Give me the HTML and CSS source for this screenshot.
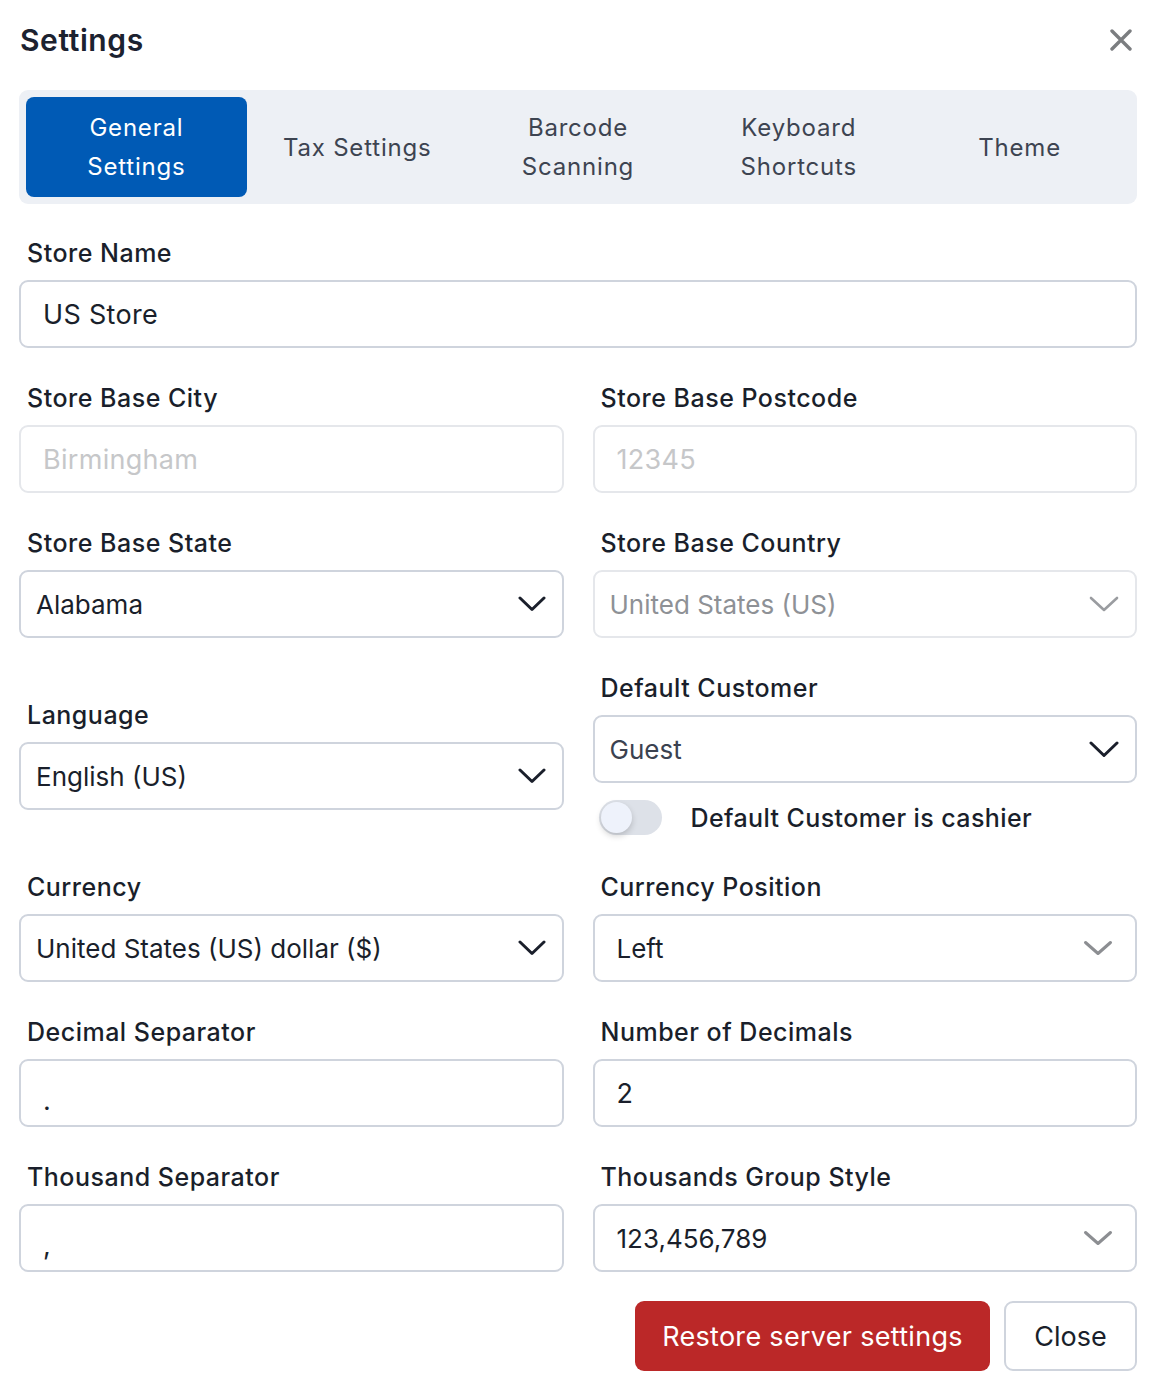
FILE: index.html
```html
<!DOCTYPE html>
<html lang="en">
<head>
    <meta charset="UTF-8">
    <meta name="viewport" content="width=device-width, initial-scale=1.0">
    <title>Settings</title>
    <link rel="stylesheet" href="styles.css">
</head>
<body>
    <div class="modal">
        <div class="modal-header">
            <h1>Settings</h1>
            <button class="close-x" aria-label="Close">
                <svg width="22" height="22" viewBox="0 0 22 22"><path d="M2 2 L20 20 M20 2 L2 20" stroke="#7b7d80" stroke-width="3.4" stroke-linecap="round" fill="none"/></svg>
            </button>
        </div>

        <div class="tabs">
            <div class="tab active">General<br>Settings</div>
            <div class="tab">Tax Settings</div>
            <div class="tab">Barcode<br>Scanning</div>
            <div class="tab">Keyboard<br>Shortcuts</div>
            <div class="tab">Theme</div>
        </div>

        <div class="form-grid">
            <div class="field full">
                <label>Store Name</label>
                <div class="input">US Store</div>
            </div>

            <div class="field">
                <label>Store Base City</label>
                <div class="input disabled">Birmingham</div>
            </div>
            <div class="field">
                <label>Store Base Postcode</label>
                <div class="input disabled">12345</div>
            </div>

            <div class="field">
                <label>Store Base State</label>
                <div class="select">
                    <span>Alabama</span>
                    <svg class="chev" width="28" height="16" viewBox="0 0 28 16"><path d="M2 2 L14 13.5 L26 2" stroke="#1a1f2b" stroke-width="3" stroke-linecap="round" stroke-linejoin="round" fill="none"/></svg>
                </div>
            </div>
            <div class="field">
                <label>Store Base Country</label>
                <div class="select disabled">
                    <span>United States (US)</span>
                    <svg class="chev" width="30" height="16" viewBox="0 0 30 16"><path d="M2 2 L15 14 L28 2" stroke="#9a9ca0" stroke-width="2.6" stroke-linecap="round" stroke-linejoin="round" fill="none"/></svg>
                </div>
            </div>

            <div class="field">
                <label>Language</label>
                <div class="select">
                    <span>English (US)</span>
                    <svg class="chev" width="28" height="16" viewBox="0 0 28 16"><path d="M2 2 L14 13.5 L26 2" stroke="#1a1f2b" stroke-width="3" stroke-linecap="round" stroke-linejoin="round" fill="none"/></svg>
                </div>
            </div>
            <div class="field">
                <label>Default Customer</label>
                <div class="select">
                    <span class="muted">Guest</span>
                    <svg class="chev" width="30" height="17" viewBox="0 0 30 17"><path d="M2 2 L15 14.5 L28 2" stroke="#1a1f2b" stroke-width="3" stroke-linecap="round" stroke-linejoin="round" fill="none"/></svg>
                </div>
                <div class="toggle-row">
                    <span class="toggle"><span class="knob"></span></span>
                    <span>Default Customer is cashier</span>
                </div>
            </div>

            <div class="field">
                <label>Currency</label>
                <div class="select">
                    <span>United States (US) dollar ($)</span>
                    <svg class="chev" width="28" height="16" viewBox="0 0 28 16"><path d="M2 2 L14 13.5 L26 2" stroke="#1a1f2b" stroke-width="3" stroke-linecap="round" stroke-linejoin="round" fill="none"/></svg>
                </div>
            </div>
            <div class="field">
                <label>Currency Position</label>
                <div class="select native">
                    <span>Left</span>
                    <svg class="chev" width="30" height="16" viewBox="0 0 30 16"><path d="M2.5 2.5 L15 13.5 L27.5 2.5" stroke="#8c8e92" stroke-width="3" stroke-linecap="round" stroke-linejoin="round" fill="none"/></svg>
                </div>
            </div>

            <div class="field">
                <label>Decimal Separator</label>
                <div class="input low">.</div>
            </div>
            <div class="field">
                <label>Number of Decimals</label>
                <div class="input">2</div>
            </div>

            <div class="field">
                <label>Thousand Separator</label>
                <div class="input low">,</div>
            </div>
            <div class="field">
                <label>Thousands Group Style</label>
                <div class="select native">
                    <span>123,456,789</span>
                    <svg class="chev" width="30" height="16" viewBox="0 0 30 16"><path d="M2.5 2.5 L15 13.5 L27.5 2.5" stroke="#8c8e92" stroke-width="3" stroke-linecap="round" stroke-linejoin="round" fill="none"/></svg>
                </div>
            </div>
        </div>

        <div class="actions">
            <button class="btn btn-danger">Restore server settings</button>
            <button class="btn btn-plain">Close</button>
        </div>
    </div>
</body>
</html>
```

FILE: styles.css
```css
body {
    margin: 0;
    background: #ffffff;
    font-family: Inter, "Noto Sans", sans-serif;
    color: #1a1f2b;
}
.modal {
    width: 1158px;
    box-sizing: border-box;
    padding: 22px 21px 20px 19px;
}
.modal-header {
    display: flex;
    justify-content: space-between;
    align-items: center;
    height: 36px;
    margin-bottom: 32px;
    padding-left: 1px;
}
.modal-header h1 {
    margin: 0;
    font-size: 30px;
    font-weight: 600;
    line-height: 36px;
    letter-spacing: 0.6px;
    color: #1c2230;
}
.close-x {
    border: 0;
    background: none;
    padding: 0;
    margin-right: 5px;
    width: 22px;
    height: 22px;
    cursor: pointer;
}
.close-x svg {
    display: block;
}
.tabs {
    display: flex;
    background: #edf0f5;
    border-radius: 9px;
    padding: 7px;
}
.tab {
    flex: 1;
    height: 100px;
    display: flex;
    align-items: center;
    justify-content: center;
    text-align: center;
    font-size: 24px;
    line-height: 39px;
    letter-spacing: 0.8px;
    color: #3d4451;
    border-radius: 8px;
}
.tab.active {
    background: #005ab5;
    color: #ffffff;
}
.form-grid {
    display: grid;
    grid-template-columns: 1fr 1fr;
    column-gap: 29px;
    row-gap: 32px;
    align-items: center;
    margin-top: 31px;
}
.field.full {
    grid-column: 1 / 3;
}
.field label {
    display: block;
    font-size: 25px;
    font-weight: 500;
    line-height: 36px;
    letter-spacing: 0.5px;
    padding-left: 8px;
    margin-bottom: 9px;
    color: #1a1f2b;
}
.input,
.select {
    box-sizing: border-box;
    height: 68px;
    border: 2px solid #cfd4dd;
    border-radius: 9px;
    padding: 0 22px;
    display: flex;
    align-items: center;
    font-size: 26px;
    color: #1a1f2b;
    background: #ffffff;
}
.input {
    font-size: 27px;
    letter-spacing: 0.3px;
}
.input.disabled {
    border-color: #e5e7eb;
    color: #c6c7c9;
}
.input.low {
    padding-top: 14px;
}
.select {
    justify-content: space-between;
    padding: 0 16px 0 15px;
}
.select.native {
    padding: 0 22px 0 22px;
}
.select.disabled {
    border-color: #e5e7eb;
    color: #8e9196;
}
.select .muted {
    color: #3b4250;
}
.chev {
    display: block;
    flex-shrink: 0;
}
.toggle-row {
    display: flex;
    align-items: center;
    height: 39px;
    margin-top: 15px;
    padding-left: 6px;
    font-size: 25px;
    font-weight: 500;
    letter-spacing: 0.4px;
    color: #1a1f2b;
}
.toggle {
    width: 63px;
    height: 35px;
    border-radius: 18px;
    background: #dde1e8;
    margin-right: 29px;
    display: flex;
    align-items: center;
    padding-left: 2px;
    box-sizing: border-box;
}
.knob {
    width: 31px;
    height: 31px;
    border-radius: 50%;
    background: #eef2fb;
    box-shadow: 0 3px 6px rgba(0, 0, 0, 0.18);
}
.actions {
    display: flex;
    justify-content: flex-end;
    gap: 14px;
    margin-top: 29px;
}
.btn {
    height: 70px;
    border-radius: 9px;
    font-family: Inter, "Noto Sans", sans-serif;
    font-size: 27px;
    letter-spacing: 0.3px;
    cursor: pointer;
    box-sizing: border-box;
}
.btn-danger {
    width: 355px;
    background: #bb2828;
    color: #ffffff;
    border: 0;
}
.btn-plain {
    width: 133px;
    background: #ffffff;
    color: #1a1f2b;
    border: 2px solid #cfd4dd;
    letter-spacing: 0;
}
```
